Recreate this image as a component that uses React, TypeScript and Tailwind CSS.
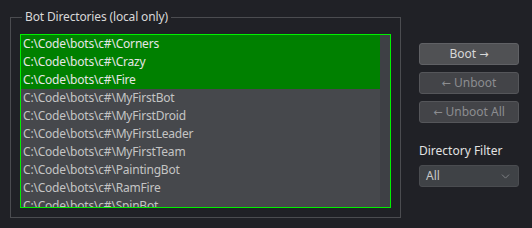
import React from 'react';
import { ChevronDown } from 'lucide-react';

const bots = [
  'Corners',
  'Crazy',
  'Fire',
  'MyFirstBot',
  'MyFirstDroid',
  'MyFirstLeader',
  'MyFirstTeam',
  'PaintingBot',
  'RamFire',
  'SpinBot',
];

const selected = ['Corners', 'Crazy', 'Fire'];

const App: React.FC = () => {
  return (
    <div
      className="w-[532px] h-[228px] bg-[#202126] flex pl-[10px] pt-[10px] text-[12px] text-[#d4d4d4] overflow-hidden"
      style={{ fontFamily: '"Noto Sans", "Open Sans", sans-serif' }}
    >
      <fieldset className="w-[391px] self-start border border-[#4b4c50] px-[9px] pb-[9px]">
        <legend className="ml-[2px] px-[3px] leading-[14px] text-[#d8d8d8] tracking-[-0.15px]">Bot Directories (local only)</legend>
        <div className="mt-[10px] h-[174px] border border-[#00f000] flex overflow-hidden">
          <div className="flex-1 overflow-hidden bg-[#46484c] tracking-[-0.2px]">
            {bots.map(name => {
              const isSel = selected.includes(name);
              return (
                <div
                  key={name}
                  className={
                    isSel
                      ? 'h-[18px] leading-[18px] pl-[2px] bg-[#008000] text-[#e6e6e6] whitespace-nowrap'
                      : 'h-[18px] leading-[18px] pl-[2px] text-[#c4c4c4] whitespace-nowrap'
                  }
                >
                  {`C:\\Code\\bots\\c#\\${name}`}
                </div>
              );
            })}
          </div>
          <div className="w-[10px] bg-[#3e4045]" />
        </div>
      </fieldset>

      <div className="ml-[18px] w-[100px] pt-[33px] flex flex-col">
        <button className="h-[22px] rounded-[3px] border border-[#606165] bg-[#505154] text-[#d8d8d8] leading-[20px]">
          Boot <span style={{ fontFamily: '"DejaVu Sans", sans-serif' }} className="text-[11px]">→</span>
        </button>
        <button
          disabled
          className="mt-[7px] h-[22px] rounded-[3px] border border-[#55565a] bg-[#434448] text-[#8c8d90] leading-[20px]"
        >
          <span style={{ fontFamily: '"DejaVu Sans", sans-serif' }} className="text-[11px]">←</span> Unboot
        </button>
        <button
          disabled
          className="mt-[7px] h-[22px] rounded-[3px] border border-[#55565a] bg-[#434448] text-[#8c8d90] leading-[20px]"
        >
          <span style={{ fontFamily: '"DejaVu Sans", sans-serif' }} className="text-[11px]">←</span> Unboot All
        </button>
        <div className="mt-[20px] leading-[16px] text-[#e2e2e2]">Directory Filter</div>
        <div className="mt-[6px] h-[22px] rounded-[3px] border border-[#4a4c50] bg-[#3f4246] flex items-center justify-between pl-[6px] pr-[6px] text-[#c8c8c8]">
          <span>All</span>
          <ChevronDown size={13} strokeWidth={1.5} className="text-[#8a8c90]" />
        </div>
      </div>
    </div>
  );
};

export default App;
